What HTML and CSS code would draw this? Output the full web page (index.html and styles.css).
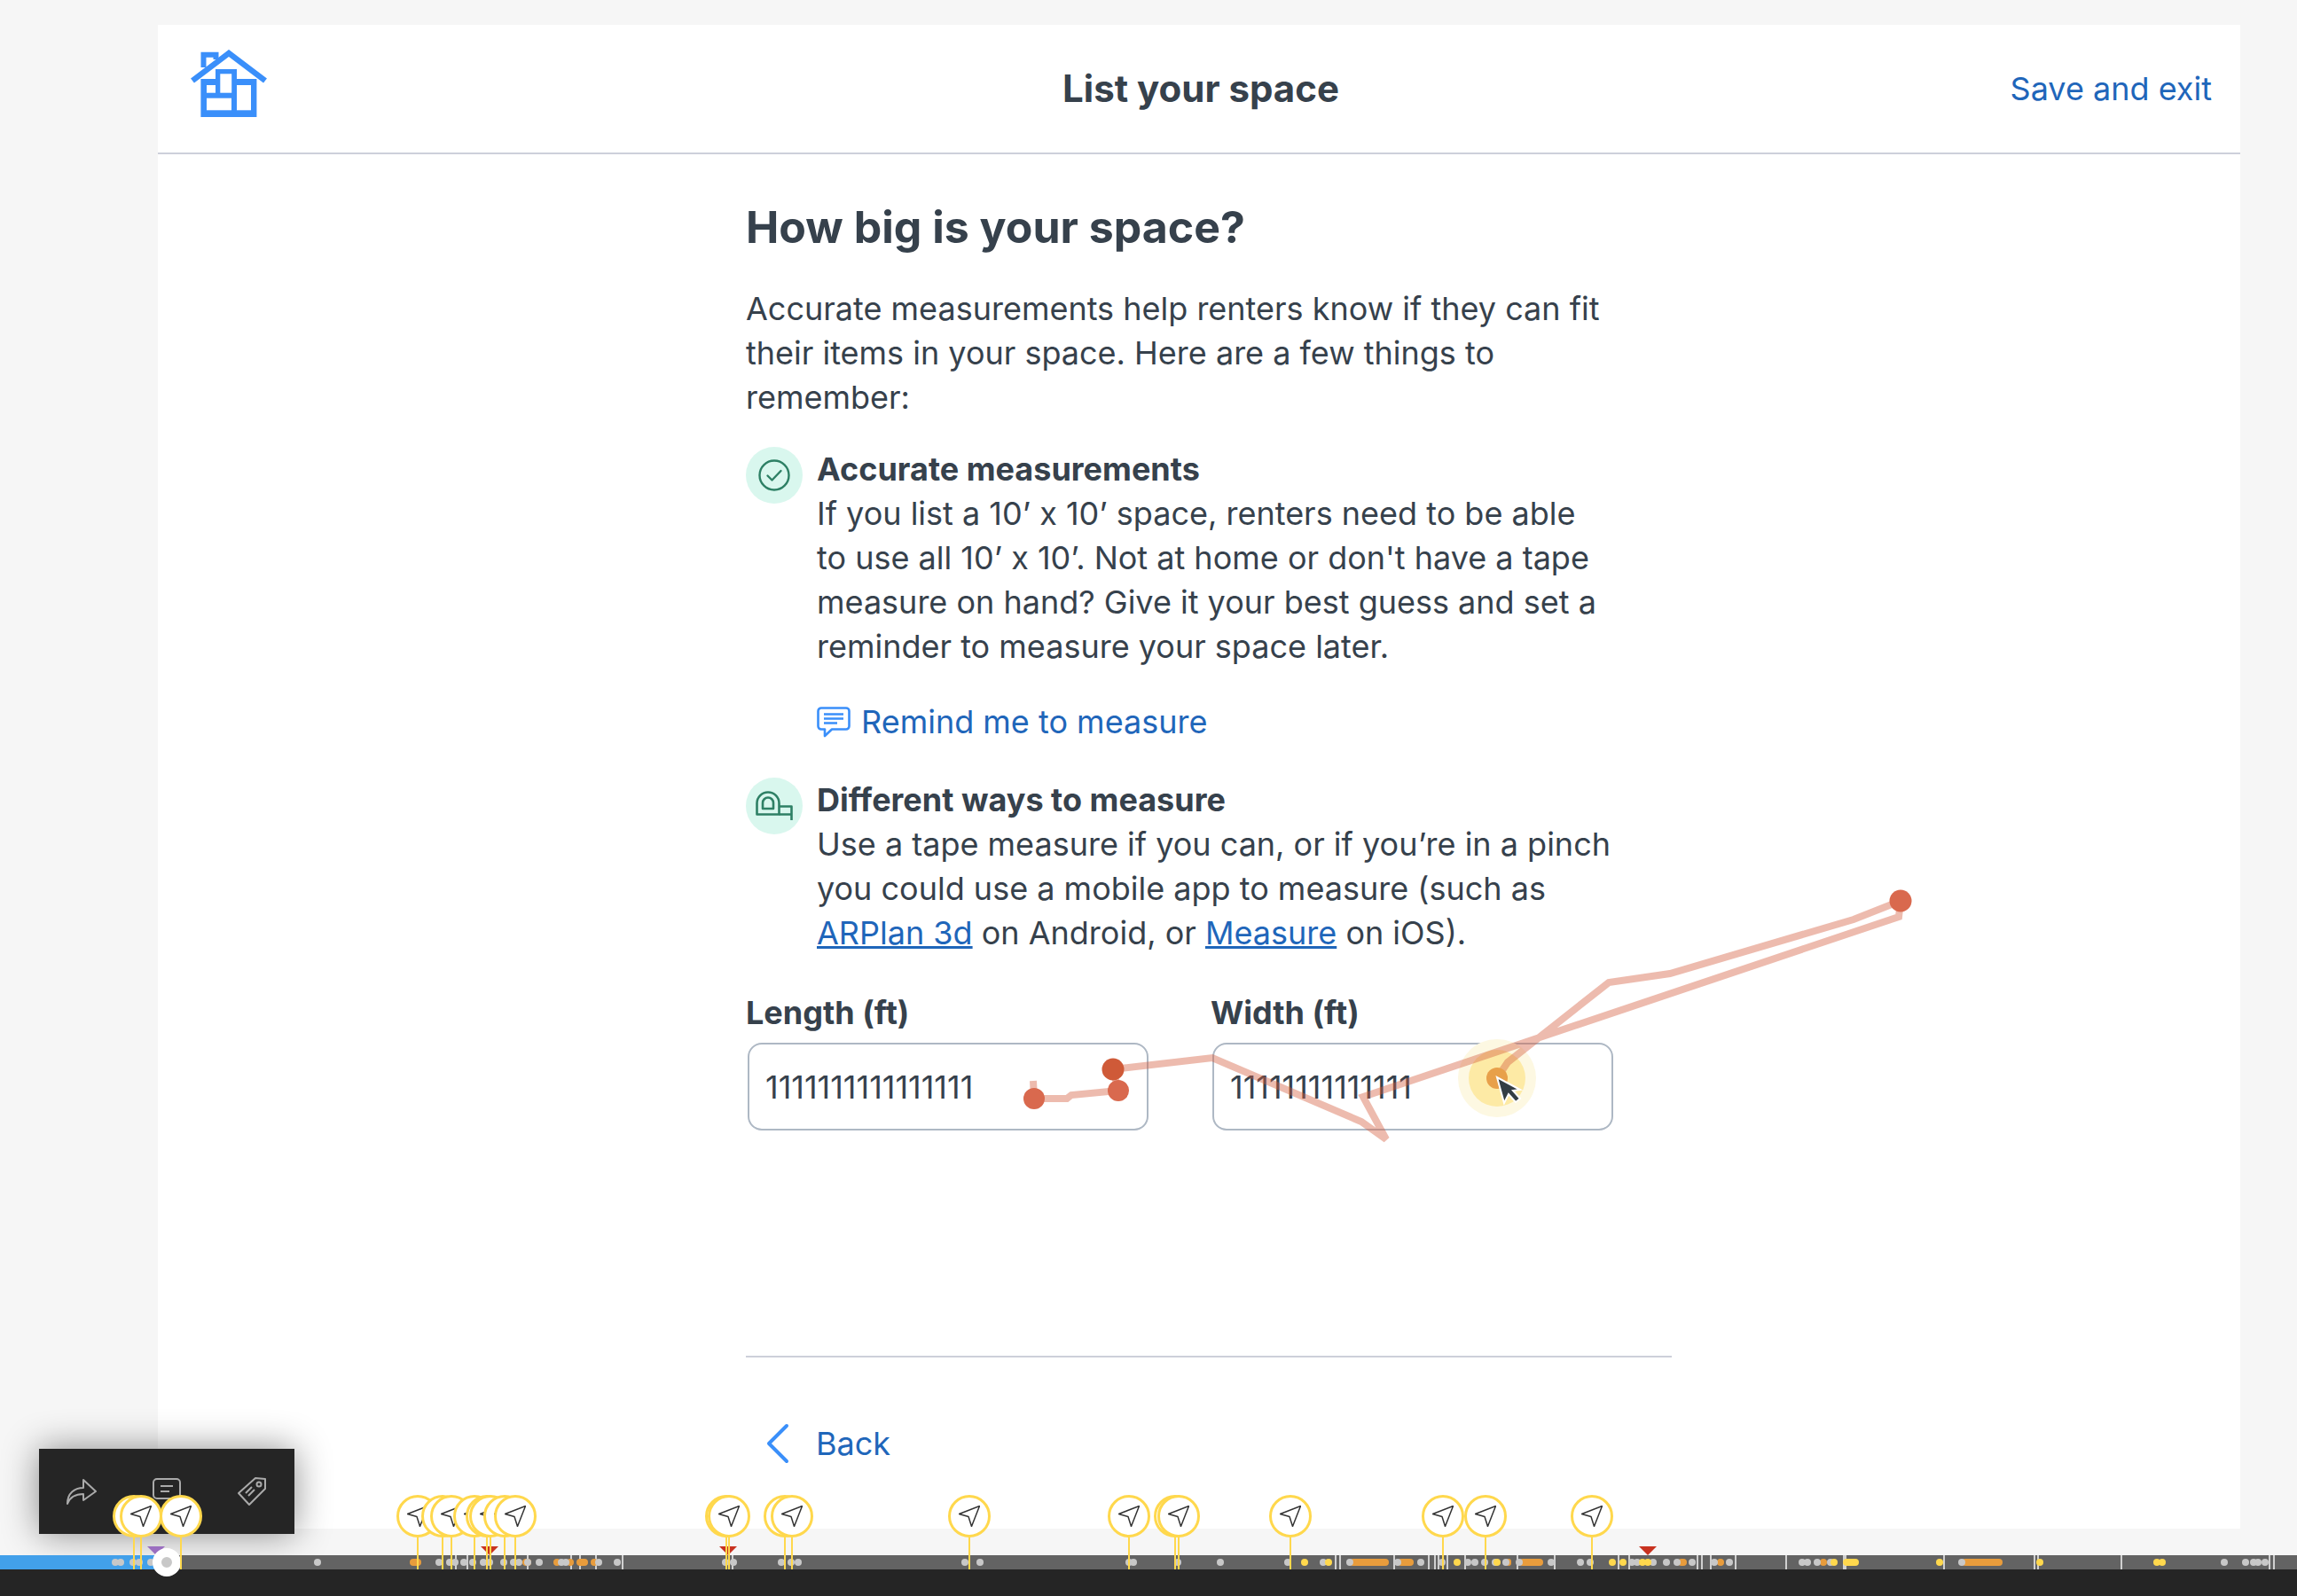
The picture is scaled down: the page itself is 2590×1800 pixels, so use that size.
FILE: index.html
```html
<!DOCTYPE html>
<html lang="en">
<head>
  <meta charset="UTF-8">
  <title>List your space</title>
  <link rel="stylesheet" href="styles.css">
</head>
<body>
  <div class="panel">
    <header class="topbar">
      <a class="logo" href="#" title="Home">
        <svg viewBox="0 0 88 76" width="88" height="76">
          <path d="M3 35 L44 4 L85 35" fill="none" stroke="#3a8ffa" stroke-width="6.5"/>
          <path d="M15.5 20 V5.7 H29.5 V11" fill="none" stroke="#3a8ffa" stroke-width="6"/>
          <path d="M12.4 33 H29 V22 H53 V33 H75.4 V76 H12.4 Z" fill="#3a8ffa"/>
          <rect x="19" y="40" width="10" height="8.7" fill="#fff"/>
          <rect x="34.3" y="27.3" width="12.9" height="21.4" fill="#fff"/>
          <rect x="19" y="54.7" width="28" height="13.6" fill="#fff"/>
          <rect x="53" y="40" width="16" height="28.3" fill="#fff"/>
        </svg>
      </a>
      <div class="topbar-title">List your space</div>
      <a class="save-link" href="#">Save and exit</a>
    </header>

    <main class="content">
      <h1>How big is your space?</h1>
      <p class="intro">Accurate measurements help renters know if they can fit their items in your space. Here are a few things to remember:</p>

      <div class="tip">
        <div class="tip-icon">
          <svg viewBox="0 0 36 36" width="36" height="36" fill="none" stroke="#2e8065" stroke-width="2.4" stroke-linecap="round" stroke-linejoin="round">
            <circle cx="18" cy="18" r="16.5"/>
            <path d="M10.5 18.5 L15.5 23.5 L25.5 13"/>
          </svg>
        </div>
        <div class="tip-body">
          <h3>Accurate measurements</h3>
          <p>If you list a 10’ x 10’ space, renters need to be able to use all 10’ x 10’. Not at home or don't have a tape measure on hand? Give it your best guess and set a reminder to measure your space later.</p>
          <a class="remind-link" href="#">
            <svg viewBox="0 0 38 35" width="38" height="35" fill="none" stroke="#3a8ffa" stroke-width="2.6" stroke-linejoin="round">
              <path d="M5 1.5 H33 a3.5 3.5 0 0 1 3.5 3.5 V22 a3.5 3.5 0 0 1 -3.5 3.5 H17 L9 33 V25.5 H5 a3.5 3.5 0 0 1 -3.5 -3.5 V5 a3.5 3.5 0 0 1 3.5 -3.5 Z"/>
              <path d="M8 8.5 H30 M8 13.5 H30 M8 18.5 H23"/>
            </svg>
            <span>Remind me to measure</span>
          </a>
        </div>
      </div>

      <div class="tip tip-second">
        <div class="tip-icon">
          <svg viewBox="0 0 42 34" width="42" height="34" fill="none" stroke="#2e8065" stroke-width="2.6" stroke-linejoin="round">
            <path d="M1.5 26.5 V14 A12.5 12.5 0 0 1 14 1.5 C21 1.5 26.5 7 26.5 14 V26.5 Z"/>
            <path d="M8 20 V13.5 a6 6 0 0 1 12 0 V20 Z"/>
            <path d="M26.5 17.5 H40.5 V33 M26.5 26.5 H40.5 M26.5 21.5"/>
          </svg>
        </div>
        <div class="tip-body">
          <h3>Different ways to measure</h3>
          <p>Use a tape measure if you can, or if you’re in a pinch you could use a mobile app to measure (such as <a href="#">ARPlan 3d</a> on Android, or <a href="#">Measure</a> on iOS).</p>
        </div>
      </div>

      <div class="fields">
        <label class="field">
          <span>Length (ft)</span>
          <input type="text" value="1111111111111111">
        </label>
        <label class="field">
          <span>Width (ft)</span>
          <input type="text" value="11111111111111">
        </label>
      </div>

      <div class="footer-nav">
        <a class="back-link" href="#">
          <svg viewBox="0 0 30 46" width="30" height="46" fill="none" stroke="#3a8ffa" stroke-width="4" stroke-linecap="round" stroke-linejoin="round">
            <path d="M25 3 L5 23 L25 43"/>
          </svg>
          <span>Back</span>
        </a>
      </div>
    </main>
  </div>

  <!-- recorded mouse trail, drawn over the page -->
  <svg class="trail" viewBox="0 0 2590 1800" width="2590" height="1800">
    <circle cx="1688" cy="1216" r="44" fill="#fdf8e2"/>
    <circle cx="1688" cy="1216" r="32" fill="#fdeaa5"/>
    <polyline class="trail-line" points="1165,1219 1166,1239 1203,1239 1208,1235 1261,1230 1255,1206 1367,1193 1535,1265 1563,1285 1537,1237 2141,1034 2143,1016 2090,1037 1883,1098 1814,1108 1700,1198 1688,1216"/>
    <circle cx="1166" cy="1239" r="12" fill="#d9694e"/>
    <circle cx="1261" cy="1230" r="12" fill="#d9694e"/>
    <circle cx="1255" cy="1206" r="12.5" fill="#cf5a38"/>
    <circle cx="2143" cy="1016" r="12.5" fill="#d9694e"/>
    <circle cx="1688" cy="1216" r="12" fill="#e8a04a"/>
    <path transform="translate(1688 1215)" d="M0 0 L8 29 L13 19 L21 28 L26 24 L18 15 L26 14 Z" fill="#333d44" stroke="#fff" stroke-width="2"/>
  </svg>

  <div class="comment-box">
    <svg viewBox="0 0 34 30" width="34" height="30" fill="none" stroke="#aaa" stroke-width="2">
      <path d="M1 29 C1 17 9 11 19 11 V2 L33 15 L19 25 V18 C11 18 4 21 1 29 Z" stroke-linejoin="round"/>
    </svg>
    <svg class="comment-icon" viewBox="0 0 32 24" width="32" height="24" fill="none" stroke="#aaa" stroke-width="2">
      <rect x="1" y="1" width="30" height="22" rx="4"/>
      <path d="M9 9 H23 M9 15 H19"/>
    </svg>
    <svg viewBox="0 0 34 34" width="34" height="34" fill="none" stroke="#aaa" stroke-width="2" stroke-linejoin="round">
      <path d="M21 2 L32 3 V14 L14 32 L2 19 Z"/>
      <circle cx="25" cy="9" r="2.5"/>
      <path d="M10 19 L17 12 M13 22 L20 15"/>
    </svg>
  </div>

  <div class="timeline" id="timeline">
    <div class="timeline-bar" id="timeline-bar">
      <div class="timeline-progress"></div>
    </div>
    <div class="timeline-base"></div>
  </div>
  <script src="timeline.js"></script>
</body>
</html>
```

FILE: styles.css
```css
html, body {
  margin: 0;
  padding: 0;
  width: 2590px;
  height: 1800px;
  overflow: hidden;
  background: #f6f6f6;
  color: #36414c;
  font-family: Inter, "Liberation Sans", sans-serif;
  font-size: 36px;
  line-height: 50px;
}
a {
  color: #1f66ba;
  text-decoration: none;
}
h1, h3, p {
  margin: 0;
}
.panel {
  box-sizing: border-box;
  width: 2348px;
  height: 1696px;
  margin: 28px 0 30px 178px;
  background: #fff;
}
.topbar {
  box-sizing: border-box;
  height: 146px;
  padding: 0 32px 0 36px;
  display: grid;
  grid-template-columns: 1fr auto 1fr;
  align-items: center;
  border-bottom: 2px solid #cdd0da;
}
.logo {
  display: flex;
  height: 76px;
  margin-top: -12px;
}
.topbar-title {
  font-size: 42px;
  font-weight: 700;
}
.save-link {
  justify-self: end;
}
.content {
  box-sizing: border-box;
  width: 1686px;
  padding: 50px 0 0 663px;
}
h1 {
  font-size: 50px;
  line-height: 64px;
  font-weight: 700;
}
.intro {
  width: 978px;
  margin-top: 35px;
}
.tip {
  display: flex;
  gap: 16px;
  width: 978px;
  margin-top: 31px;
}
.tip-second {
  margin-top: 38px;
}
.tip-icon {
  flex: 0 0 64px;
  width: 64px;
  height: 64px;
  border-radius: 50%;
  background: #d9f7ee;
  display: flex;
  align-items: center;
  justify-content: center;
}
.tip-body {
  flex: 1;
}
.tip-body h3 {
  font-size: 36px;
  font-weight: 700;
}
.tip-body p a {
  text-decoration: underline;
}
.remind-link {
  display: flex;
  align-items: center;
  gap: 12px;
  margin-top: 35px;
}
.fields {
  display: grid;
  grid-template-columns: 454px 454px;
  gap: 70px;
  margin-top: 40px;
}
.field span {
  display: block;
  font-weight: 700;
}
.field input {
  display: block;
  box-sizing: border-box;
  width: 452px;
  height: 99px;
  margin: 9px 0 0 2px;
  padding: 0 18px;
  border: 2px solid #aeb8c4;
  border-radius: 16px;
  background: #fff;
  color: #36414c;
  font-family: inherit;
  font-size: 36px;
  outline: none;
}
.footer-nav {
  width: 1023px;
  margin-top: 254px;
  border-top: 2px solid #cdd0da;
  padding: 72px 0 0 21px;
}
.back-link {
  display: flex;
  align-items: center;
  gap: 28px;
}
.trail {
  position: absolute;
  left: 0;
  top: 0;
  pointer-events: none;
}
.trail-line {
  fill: none;
  stroke: rgba(212, 92, 62, 0.42);
  stroke-width: 8;
}
.comment-box {
  position: absolute;
  left: 44px;
  top: 1634px;
  width: 288px;
  height: 96px;
  background: #252525;
  box-shadow: 0 0 40px rgba(0, 0, 0, 0.45);
  display: grid;
  grid-template-columns: repeat(3, 96px);
  align-items: center;
  justify-items: center;
  padding-bottom: 0;
}
.comment-icon {
  margin-top: -6px;
}
.timeline {
  position: relative;
}
.timeline-bar {
  position: relative;
  height: 16px;
  background: #636363;
}
.timeline-base {
  height: 30px;
  background: #252525;
}
.timeline-progress {
  position: absolute;
  left: 0;
  top: 0;
  bottom: 0;
  width: 187px;
  background: #42a0ea;
}
.tick {
  position: absolute;
  top: 0;
  bottom: 0;
  width: 2px;
  background: rgba(255, 255, 255, 0.7);
}
.tick-wide {
  width: 4px;
}
.dot {
  position: absolute;
  top: 4px;
  height: 8px;
  border-radius: 4px;
}
.dot-gray {
  background: #c8c8c8;
}
.dot-orange {
  background: #e89c3c;
}
.dot-yellow {
  background: #ffd84d;
}
.flag {
  position: absolute;
  bottom: 16px;
  width: 0;
  height: 0;
  margin-left: -10px;
  border-left: 10px solid transparent;
  border-right: 10px solid transparent;
  border-top: 10px solid #c8321f;
}
.flag-purple {
  border-top-color: #9b6fc0;
}
.pin {
  position: absolute;
  top: -68px;
  width: 48px;
  height: 84px;
  margin-left: -24px;
}
.pin::after {
  content: "";
  position: absolute;
  left: 23px;
  top: 48px;
  width: 2px;
  height: 36px;
  background: #ffd84d;
}
.pin-head {
  box-sizing: border-box;
  width: 48px;
  height: 48px;
  border: 3px solid #ffd84d;
  border-radius: 50%;
  background: #fff;
  display: flex;
  align-items: center;
  justify-content: center;
}
.handle {
  position: absolute;
  left: 172px;
  top: -8px;
  box-sizing: border-box;
  width: 32px;
  height: 32px;
  border: 10px solid #fff;
  border-radius: 50%;
  background: #c8c8c8;
}
```

FILE: timeline.js
```js
var bar = document.getElementById('timeline-bar');
var timeline = document.getElementById('timeline');

var ticks = [513, 526, 594, 643, 653, 671, 701, 825, 1505, 1510, 1571, 1610, 1617, 1621, 1631, 1651, 1710, 1752, 1824, 1836, 1913, 1918, 1928, 1956, 2013, 2191, 2293, 2297, 2391, 2558, 2563];
var wideTicks = [2078];
var gray = [130, 136, 150, 157, 170, 358, 495, 507, 513, 523, 533, 545, 552, 568, 579, 585, 595, 608, 633, 638, 675, 696, 818, 827, 881, 892, 900, 1088, 1105, 1273, 1278, 1328, 1376, 1452, 1492, 1522, 1576, 1602, 1626, 1655, 1663, 1674, 1686, 1698, 1713, 1749, 1782, 1793, 1840, 1846, 1864, 1879, 1891, 1908, 1933, 1950, 2032, 2038, 2049, 2064, 2212, 2508, 2532, 2541, 2546, 2554];
var yellow = [1471, 1498, 1643, 1688, 1818, 1830, 1852, 1858, 2068, 2187, 2300, 2432, 2438];
// [start, end] of the longer stretches
var orangeBars = [[462, 475], [589, 599], [624, 632], [639, 647], [650, 663], [666, 674], [1522, 1566], [1576, 1594], [1698, 1704], [1713, 1740], [1892, 1902], [1936, 1944], [2052, 2060], [2212, 2258]];
var yellowBars = [[2078, 2096]];
var flags = [[176, true], [552], [821], [1858]];
var pins = [151, 159, 204, 471, 499, 509, 535, 549, 553, 569, 581, 819, 822, 885, 893, 1093, 1273, 1325, 1329, 1455, 1627, 1675, 1795];

function add(parent, cls, left, width) {
  var el = document.createElement('div');
  el.className = cls;
  el.style.left = left + 'px';
  if (width) el.style.width = width + 'px';
  parent.appendChild(el);
  return el;
}

ticks.forEach(function (x) { add(bar, 'tick', x); });
wideTicks.forEach(function (x) { add(bar, 'tick tick-wide', x); });
orangeBars.forEach(function (b) { add(bar, 'dot dot-orange', b[0], b[1] - b[0]); });
yellowBars.forEach(function (b) { add(bar, 'dot dot-yellow', b[0], b[1] - b[0]); });
gray.forEach(function (x) { add(bar, 'dot dot-gray', x - 4, 8); });
yellow.forEach(function (x) { add(bar, 'dot dot-yellow', x - 4, 8); });
flags.forEach(function (f) { add(bar, f[1] ? 'flag flag-purple' : 'flag', f[0]); });

add(bar, 'handle');

pins.forEach(function (x) {
  var pin = add(bar, 'pin', x);
  pin.innerHTML = '<div class="pin-head"><svg viewBox="0 0 24 24" width="24" height="24" fill="none" stroke="#333" stroke-width="1.5" stroke-linejoin="round"><path d="M23.5 0.5 L0.5 9.5 L11 12.5 L14.5 23.5 Z"/></svg></div>';
});
```
